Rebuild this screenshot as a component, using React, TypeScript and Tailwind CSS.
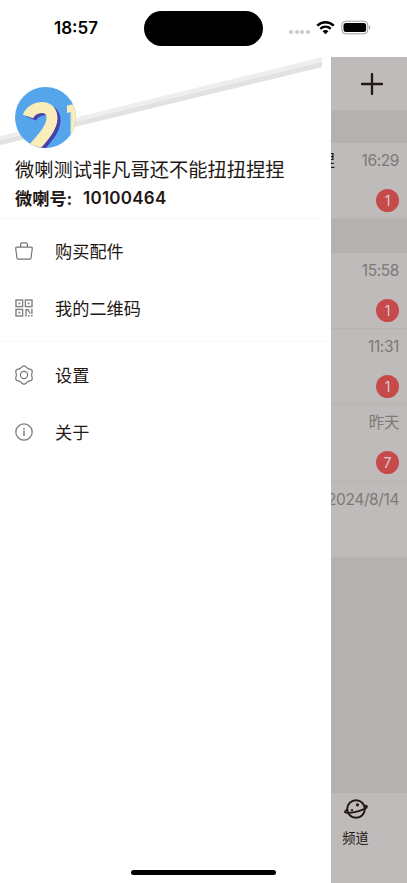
import React from 'react';

const BagIcon = () => (
  <svg width="18" height="18" viewBox="0 0 18 18" fill="none" stroke="#777" strokeWidth="1.2" strokeLinejoin="round">
    <path d="M1.6 5.1h14.8c.6 0 1 .4.9 1l-1.2 9.5c-.1.9-.7 1.5-1.6 1.5h-11c-.9 0-1.5-.6-1.6-1.5L.7 6.1c-.1-.6.3-1 .9-1z" />
    <path d="M5.6 5V2.4c0-1 .6-1.6 1.6-1.6h3.6c1 0 1.6.6 1.6 1.6V5" />
  </svg>
);

const QrIcon = () => (
  <svg width="18" height="18" viewBox="0 0 18 18" fill="none" stroke="#808080" strokeWidth="1.4">
    <rect x="1" y="1" width="6.6" height="6.6" />
    <rect x="10.4" y="1" width="6.6" height="6.6" />
    <rect x="1" y="10.4" width="6.6" height="6.6" />
    <path d="M3.4 4.3h1.8M12.8 4.3h1.8M3.4 13.7h1.8" strokeWidth="1.8" />
    <path d="M11 17.6V10.7h2L15.2 14.5M16.9 9.8v5.2M13 16.8h1.6M15.9 16.8h1.7" />
  </svg>
);

const GearIcon = () => (
  <svg className="shrink-0" width="20" height="20" viewBox="0 0 20 20" fill="none" stroke="#777" strokeWidth="1.2">
    {[0, 60, 120, 180, 240, 300].map((angle) => (
      <path key={angle} d="M6.1 3.3C7.9 2.9 7.7.8 10 .8S12.1 2.9 13.9 3.3" transform={`rotate(${angle} 10 10)`} />
    ))}
    <circle cx="10" cy="10" r="3.6" />
  </svg>
);

const InfoIcon = () => (
  <svg width="18" height="18" viewBox="0 0 18 18" fill="none" stroke="#777" strokeWidth="1.2">
    <circle cx="9" cy="9" r="8.2" />
    <path d="M9 7.6v5.2M9 4.9v1.5" strokeWidth="1.4" />
  </svg>
);

const PlanetIcon = () => (
  <svg width="24" height="20" viewBox="0 0 24 20" fill="none" stroke="#231815" strokeWidth="1.9" strokeLinecap="round">
    <circle cx="12" cy="10" r="8.8" />
    <path d="M3.3 10.6C.3 12.2.4 13.8 3 13.8C9 13.8 15 12.4 20.6 9.8C23.8 8.2 23.7 6.3 20.5 6.9" />
    <circle cx="13.5" cy="5.8" r="1.6" fill="#231815" stroke="none" />
    <circle cx="8" cy="11.2" r="1.1" fill="#231815" stroke="none" />
  </svg>
);

const Avatar = () => (
  <svg className="relative" width="61" height="61" viewBox="0 0 61 61" fill="none">
    <defs>
      <clipPath id="avatar">
        <circle cx="30.5" cy="30.5" r="30.5" />
      </clipPath>
    </defs>
    <g clipPath="url(#avatar)">
      <rect width="61" height="61" fill="#54a5eb" />
      <path d="M16 31.5C20 21 40 18 40 33.5C40 43 32 51 22 63" stroke="#4740b0" strokeWidth="11" />
      <path d="M13 29.5C17 18 37.5 16 37 31.5C36.5 42 27 51 17 63" stroke="#fbedb9" strokeWidth="11" />
      <path d="M52 18.5L61 17V61H56V25L52 26z" fill="#fbedb9" />
      <path d="M56 25V49" stroke="#c9e9dc" />
    </g>
  </svg>
);

const StatusBar = () => (
  <div className="flex h-[57px] shrink-0 items-start bg-white">
    <div className="w-[144px] pt-[18px] pl-[54px] text-[17px] leading-5 font-semibold text-black">18:57</div>
    <div className="mt-[11px] h-[35px] w-[119px] rounded-full bg-black" />
    <div className="flex items-center pt-[20px] pl-[26px]">
      <div className="mt-[9px] flex gap-[1.5px]">
        {[0, 1, 2, 3].map((i) => (
          <span key={i} className="size-[4px] rounded-full bg-[#c8c8c8]" />
        ))}
      </div>
      <svg className="ml-[6px]" width="19" height="15" viewBox="0 0 20 15" fill="none" stroke="#000" strokeWidth="2.7">
        <path d="M1.3 5.6C6.3 .7 13.7 .7 18.7 5.6" />
        <path d="M4.5 8.9C7.7 5.9 12.3 5.9 15.5 8.9" />
        <path d="M10 14.5L6.9 11.4C8.6 9.8 11.4 9.8 13.1 11.4z" fill="#000" stroke="none" />
      </svg>
      <svg className="ml-[6.5px]" width="30" height="15" viewBox="0 0 30 15" fill="none">
        <rect x=".8" y="1.2" width="26" height="12.6" rx="4" stroke="#9b9b9b" />
        <rect x="2.5" y="2.9" width="22.6" height="9.2" rx="2.5" fill="#000" />
        <path d="M28 5.3v4.4c1.8-.7 1.8-3.7 0-4.4z" fill="#9b9b9b" />
      </svg>
    </div>
  </div>
);

interface MenuItemProps {
  icon: React.ReactNode;
  label: string;
}

const MenuItem: React.FC<MenuItemProps> = ({ icon, label }) => (
  <div className="flex h-[57px] items-center pl-[14px]">
    <span className="mb-[2px] flex w-5 justify-center">{icon}</span>
    <span className="ml-[21px] text-[17.2px] leading-6">{label}</span>
  </div>
);

const Drawer = () => (
  <aside className="w-[331px] shrink-0 bg-white text-[#231815]">
    <div className="relative h-[162px] w-[322px] border-b border-[#f7f7f7] pt-[30px] pl-[15px]">
      <svg className="absolute top-0 left-0" width="322" height="90" viewBox="0 0 322 90">
        <path d="M0 79L322 0V10L0 88z" fill="#eeeeee" />
        <path d="M0 83.5L322 5V10L0 88z" fill="#e2e2e2" />
      </svg>
      <Avatar />
      <h1 className="relative mt-[8px] text-[19.25px] leading-7 whitespace-nowrap">微喇测试非凡哥还不能扭扭捏捏</h1>
      <p className="flex text-[17px] leading-[29px] font-semibold">
        <span className="w-[68px] text-[17.2px] font-bold">微喇号:</span>
        <span className="tracking-[0.25px]">10100464</span>
      </p>
    </div>
    <nav className="border-b border-[#f9f9f9] pt-[4px] pb-[4px]">
      <MenuItem icon={<BagIcon />} label="购买配件" />
      <MenuItem icon={<QrIcon />} label="我的二维码" />
    </nav>
    <nav className="pt-[5px]">
      <MenuItem icon={<GearIcon />} label="设置" />
      <MenuItem icon={<InfoIcon />} label="关于" />
    </nav>
  </aside>
);

interface ChatRowProps {
  time: string;
  count?: number;
  title?: string;
}

const ChatRow: React.FC<ChatRowProps> = ({ time, count, title }) => (
  <div className="relative flex h-[76.25px] flex-col items-end border-b border-[#b7b3b2] bg-[#bfbbba] pt-[6px] pr-[8px]">
    {title && <span className="absolute top-[6px] right-[72px] text-[17px] leading-6 text-[#231815]">{title}</span>}
    <span className="text-[15.5px] leading-6 tracking-[-0.4px] whitespace-nowrap text-[#7d7978]">{time}</span>
    {count && (
      <span className="mt-[16px] flex size-[23px] items-center justify-center rounded-full bg-[#c74a4b] text-[14px] text-[#d5cccb]">
        {count}
      </span>
    )}
  </div>
);

const ChatList = () => (
  <main className="flex flex-1 flex-col overflow-hidden bg-[#b5b1b0]">
    <header className="flex h-[53px] items-center justify-center bg-[#bfbbba] pl-[6px]">
      <svg width="22" height="22" viewBox="0 0 22 22" stroke="#231815" strokeWidth="2.3" strokeLinecap="round">
        <path d="M11 1v20M1 11h20" />
      </svg>
    </header>
    <div className="pt-[33px]">
      <ChatRow time="16:29" count={1} title="捏" />
    </div>
    <div className="pt-[33.5px]">
      <ChatRow time="15:58" count={1} />
      <ChatRow time="11:31" count={1} />
      <ChatRow time="昨天" count={7} />
      <ChatRow time="2024/8/14" />
    </div>
    <footer className="mt-auto flex h-[90px] flex-col items-center bg-[#bfbbba] pt-[6px] pr-[27px] text-[#231815]">
      <PlanetIcon />
      <span className="mt-[9px] text-[13.2px] leading-5">频道</span>
    </footer>
  </main>
);

export default function App() {
  return (
    <div className="relative flex h-[883px] w-[407px] flex-col overflow-hidden bg-white font-[Inter,'Noto_Sans_CJK_SC',sans-serif]">
      <StatusBar />
      <div className="flex min-h-0 flex-1">
        <Drawer />
        <ChatList />
      </div>
      <div className="absolute bottom-[8px] left-[131px] h-[5px] w-[145px] rounded-full bg-black" />
    </div>
  );
}
